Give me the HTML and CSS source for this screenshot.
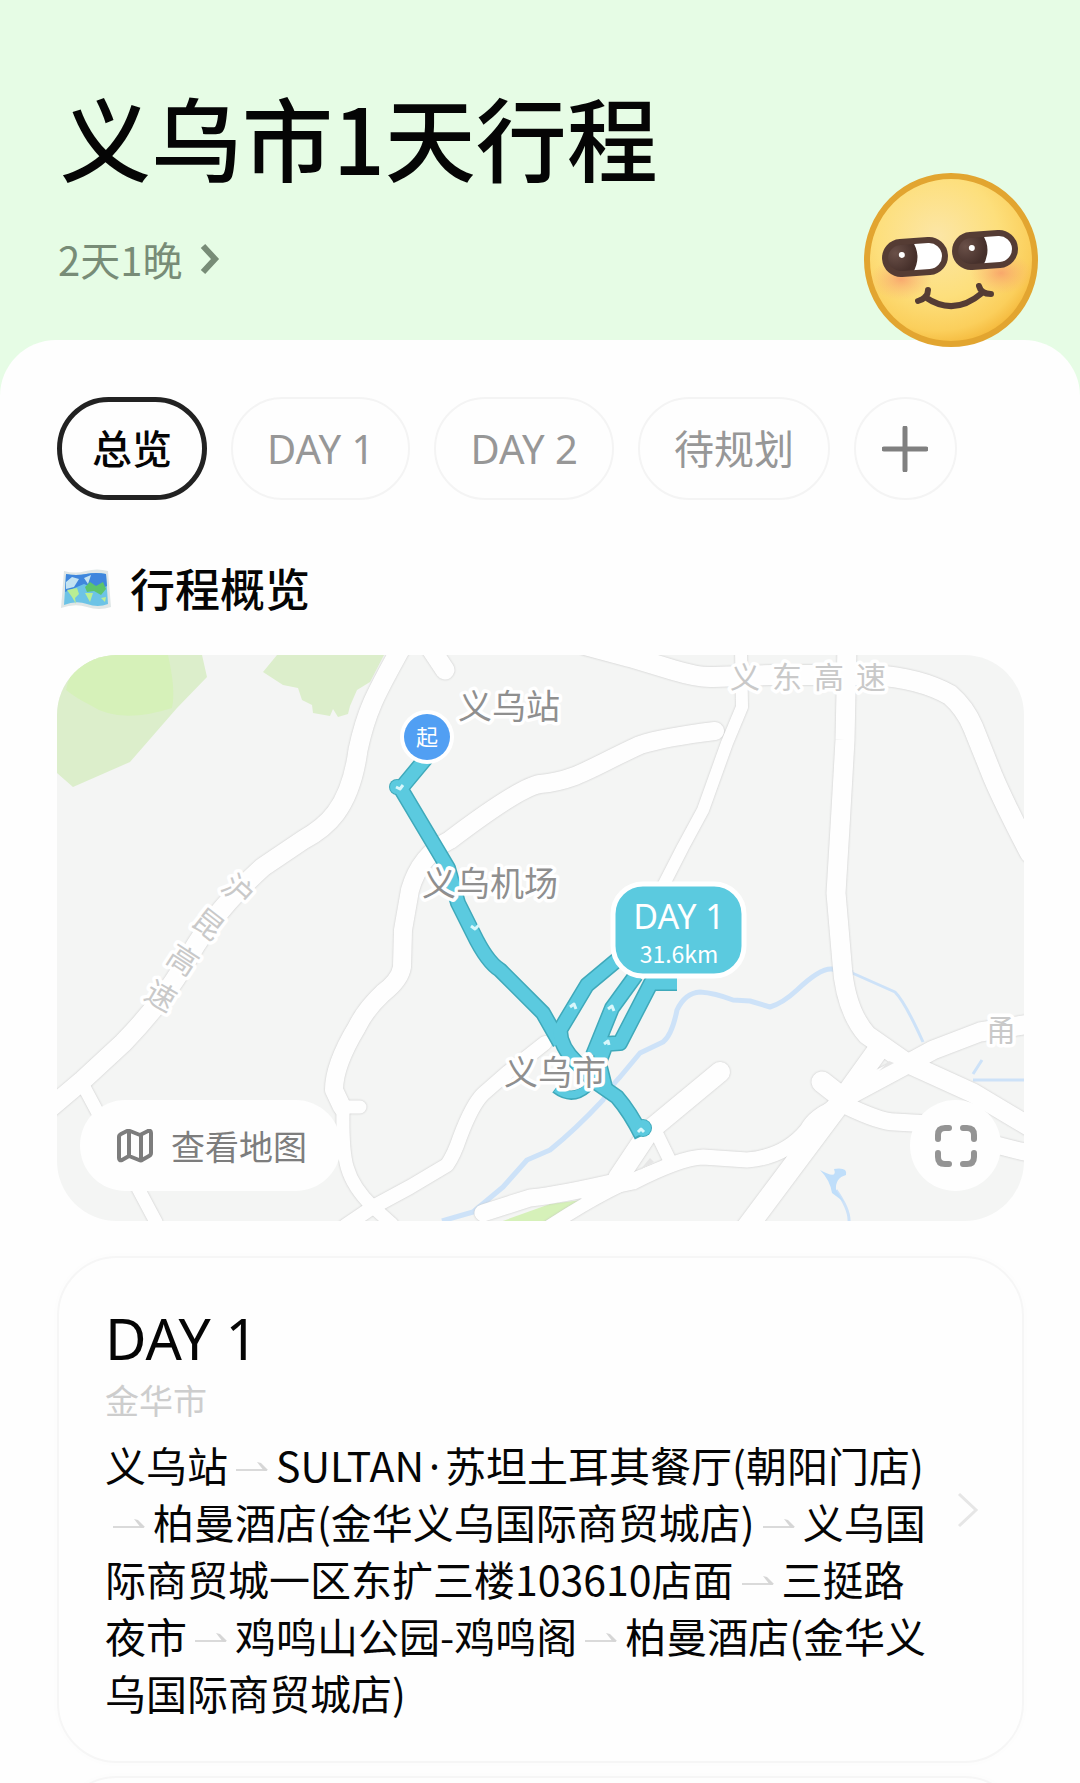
FILE: index.html
```html
<!DOCTYPE html>
<html lang="zh-CN">
<head>
<meta charset="utf-8">
<meta name="viewport" content="width=device-width, initial-scale=1">
<title>义乌市1天行程</title>
<link rel="stylesheet" href="styles.css">
</head>
<body>
<div class="screen">
  <header class="hero">
    <h1 class="hero-title">义乌市1天行程</h1>
    <button class="hero-duration" type="button">
      <span>2天1晚</span>
      <svg class="hero-chevron" viewBox="0 0 20 32" aria-hidden="true"><path d="M3 3 L15 16 L3 29"/></svg>
    </button>
    <svg class="smirk" viewBox="0 0 174 174" aria-hidden="true">
      <defs>
        <radialGradient id="face" cx="0.42" cy="0.36" r="0.66">
          <stop offset="0" stop-color="#fce6a6"/>
          <stop offset="0.55" stop-color="#fddf7c"/>
          <stop offset="0.85" stop-color="#fbcf5c"/>
          <stop offset="1" stop-color="#f4b83a"/>
        </radialGradient>
        <radialGradient id="blush">
          <stop offset="0" stop-color="#f79b6a" stop-opacity="0.8"/>
          <stop offset="1" stop-color="#f9b070" stop-opacity="0"/>
        </radialGradient>
        <radialGradient id="pupil" cx="0.35" cy="0.35" r="0.6">
          <stop offset="0" stop-color="#6a5048"/>
          <stop offset="1" stop-color="#46302b"/>
        </radialGradient>
      </defs>
      <circle cx="87" cy="87" r="84" fill="url(#face)" stroke="#e2a530" stroke-width="6"/>
      <ellipse cx="37" cy="106" rx="31" ry="21" fill="url(#blush)"/>
      <ellipse cx="137" cy="100" rx="31" ry="21" fill="url(#blush)"/>
      <g transform="translate(51 84) rotate(-4)">
        <rect x="-30" y="-16" width="60" height="32" rx="16" fill="#fff"/>
        <path d="M-14 -17 H-2 Q8 0 -4 17 H-14 A17 17 0 0 1 -14 -17 Z" fill="url(#pupil)"/>
        <rect x="-30" y="-16" width="60" height="32" rx="16" fill="none" stroke="#553c34" stroke-width="6"/>
        <circle cx="-13" cy="-3" r="3" fill="#fff"/>
      </g>
      <g transform="translate(121 77) rotate(-4)">
        <rect x="-30" y="-16" width="60" height="32" rx="16" fill="#fff"/>
        <path d="M-14 -17 H-2 Q8 0 -4 17 H-14 A17 17 0 0 1 -14 -17 Z" fill="url(#pupil)"/>
        <rect x="-30" y="-16" width="60" height="32" rx="16" fill="none" stroke="#553c34" stroke-width="6"/>
        <circle cx="-13" cy="-3" r="3" fill="#fff"/>
      </g>
      <path d="M54 128 Q64 125 64 117 M61 124 Q90 144 118 120 M115 113 Q117 121 127 121" fill="none" stroke="#553c34" stroke-width="6" stroke-linecap="round" stroke-linejoin="round"/>
    </svg>
  </header>

  <main class="sheet">
    <nav class="tabs" aria-label="行程">
      <button class="tab tab-active" type="button">总览</button>
      <button class="tab" type="button">DAY 1</button>
      <button class="tab" type="button">DAY 2</button>
      <button class="tab" type="button">待规划</button>
      <button class="tab tab-add" type="button" aria-label="添加">
        <svg viewBox="0 0 46 46" aria-hidden="true"><path d="M23 2 V44 M2 23 H44"/></svg>
      </button>
    </nav>

    <h2 class="section-title">
      <svg class="section-icon" viewBox="0 0 52 48" aria-hidden="true">
        <g transform="translate(0 6)">
          <path d="M4 1 Q15 4 26 1 T48 1 L51 37 Q39 41 27 37 T1 38 Z" fill="#dfe6e6"/>
          <path d="M6 4 Q16 6 26 4 T46 4 L48 34 Q38 38 27 34 T4 35 Z" fill="#6cc3e6"/>
          <path d="M6 4 Q16 6 26 4 T46 4 L47 16 L38 20 L24 14 L5 22 Z" fill="#3f86dd"/>
          <path d="M6 12 L12 7 L19 9 L14 17 L6 19 Z M24 8 L31 5 L28 14 Z" fill="#c3e3f2"/>
          <path d="M25 17 L30 12 L36 16 L43 12 L46 19 L41 25 L34 21 L27 22 Z" fill="#5cc46c"/>
          <path d="M7 20 L17 18 L19 24 L15 28 L16 34 L12 27 Z M25 23 L33 23 L30 32 Z M41 28 L46 27 L45 32 Z" fill="#b9ee93"/>
        </g>
      </svg>
      行程概览
    </h2>

    <section class="map" aria-label="行程概览">
      <svg class="map-canvas" viewBox="57 655 967 566" preserveAspectRatio="xMidYMid slice">
        <defs>
          <g id="roads">
            <path stroke-width="19" d="M400 650 C375 695 366 712 358 750 C350 810 325 828 303 840 L263 867 C215 910 195 945 183 967 Q160 1005 123 1043 L83 1080 L50 1108"/>
            <path stroke-width="13" d="M83 1085 L156 1222"/>
            <path stroke-width="19" d="M425 640 L445 670"/>
            <path stroke-width="18" d="M715 731 Q665 737 640 745 C590 768 575 781 540 784 Q520 787 450 840 Q420 855 410 890 L403 930 L402 967 Q400 980 383 993 Q365 1010 357 1027 Q334 1065 334 1090 L342 1107"/>
            <path stroke-width="13" d="M342 1107 L360 1107 M343 1110 C342 1160 345 1180 373 1207 L392 1224"/>
            <path stroke-width="14" d="M345 1226 L373 1207 L410 1187 L447 1165 Q454 1155 460 1137 Q472 1105 483 1094 L507 1073 L545 1043"/>
            <path stroke-width="20" d="M585 645 L630 657 L673 670 Q700 678 713 677 L773 675 L873 675 Q920 678 950 695 Q965 708 973 727 L993 777 Q1005 805 1030 853"/>
            <path stroke-width="12" d="M741 648 L742 707 L727 743 L703 810 L683 847 L660 892"/>
            <path stroke-width="19" d="M847 645 L845 740 L840 827 L836 893 L842 963 Q845 1010 867 1035 L907 1063 L973 1093 L1030 1127"/>
            <path stroke-width="19" d="M1030 1024 L980 1032 L933 1050 L900 1068 L853 1093 L830 1112"/>
            <path stroke-width="15" d="M835 1108 Q815 1115 807 1130 Q785 1157 747 1160 L703 1157 Q680 1158 633 1182 L585 1192"/>
            <path stroke-width="21" d="M878 1050 L840 1103 L745 1230 M822 1082 L845 1100"/>
            <path stroke-width="20" d="M720 1072 L650 1130 L618 1178"/>
            <path stroke-width="13" d="M655 1130 L672 1165 M672 1165 Q620 1180 550 1226"/>
            <path stroke-width="17" d="M620 1181 Q560 1195 530 1198 L483 1213"/>
            <path stroke-width="17" d="M845 1105 Q880 1122 895 1122 L930 1124 Q990 1145 1030 1153"/>
          </g>
        </defs>
        <rect x="57" y="655" width="967" height="566" fill="#f4f5f4"/>
        <path fill="#dceecb" d="M57 655 H202 L207 677 L177 708 L130 762 L73 787 L57 773 Z"/>
        <path fill="#d6f1b9" d="M66 690 Q72 655 115 655 H168 Q176 690 172 708 Q120 725 90 705 Q76 698 66 690 Z"/>
        <path fill="#dceecb" d="M277 655 L263 672 L283 685 L298 688 L302 700 L312 705 L313 713 L330 716 L333 709 L338 717 L348 714 L350 706 L357 690 L370 682 L384 655 Z"/>
        <path fill="#d6f1b9" d="M500 1222 L550 1204 L582 1200 L550 1222 Z"/>
        <g fill="none" stroke="#cde2f8" stroke-width="5" stroke-linejoin="round">
          <path d="M442 1221 L473 1212 L503 1187 L527 1160 L550 1150 Q575 1130 603 1100 Q612 1085 620 1077 L640 1053 L663 1042 Q672 1035 677 1010 Q685 993 700 992 Q715 993 733 1000 L750 1001 L770 1007 Q783 1003 797 990 Q820 968 832 969 L853 973"/>
          <path stroke-width="3" d="M850 972 L895 992 Q905 1002 923 1042"/>
          <path stroke-width="3" d="M973 1080 H1024 M973 1074 L982 1060"/>
          <path stroke-width="3" d="M836 1190 Q850 1210 849 1222"/>
        </g>
        <path fill="#bfdefa" d="M820 1170 Q838 1180 834 1169 Q848 1167 846 1175 Q835 1178 836 1190 L844 1202 L832 1193 Q830 1180 820 1170 Z"/>
        <g fill="none" stroke-linecap="round" stroke-linejoin="round">
          <use href="#roads" class="road-casing"/>
          <use href="#roads" class="road-fill"/>
          <path class="road-gap" d="M879 1071 L889 1061 L894 1063 Z M640 1170 L650 1158 L654 1162 Z"/>
        </g>
        <g fill="none" stroke-linejoin="round">
          <g stroke="#3fa9ba" stroke-width="16">
            <path d="M427 757 L402 787 M398 784 L448 868 L458 903 L473 933 Q487 962 500 970 L543 1013 L560 1043"/>
            <path d="M617 960 L587 985 L560 1030 Q560 1047 577 1063 L594 1081 L617 1097 Q630 1112 642 1136"/>
            <path d="M636 975 L612 1008 L593 1055 M677 983 L651 983 L620 1043 L606 1044 L599 1063 L605 1087"/>
          </g>
          <circle cx="397" cy="787" r="8" fill="#3fa9ba"/>
          <circle cx="643" cy="1128" r="9" fill="#3fa9ba"/>
          <path d="M555 1089 Q572 1102 588 1088" stroke="#3fa9ba" stroke-width="9"/>
          <g stroke="#5bcadf" stroke-width="13">
            <path d="M427 757 L402 787 M398 784 L448 868 L458 903 L473 933 Q487 962 500 970 L543 1013 L560 1043"/>
            <path d="M636 975 L612 1008 L593 1055 M677 983 L651 983 L620 1043 L606 1044 L599 1063 L605 1087"/>
            <path d="M617 960 L587 985 L560 1030 Q560 1047 577 1063 L594 1081 L617 1097 Q630 1112 641 1134"/>
          </g>
          <path d="M556 1089 Q572 1101 587 1088" stroke="#5bcadf" stroke-width="7"/>
          <circle cx="397" cy="787" r="7" fill="#5bcadf"/>
          <circle cx="643" cy="1128" r="8" fill="#5bcadf"/>
          <g stroke="#d8f7fb" stroke-width="3">
            <path d="M396 787 L400 789 L403 785 M471 926 L475 929 L479 925 M570 1007 L574 1004 L576 1009 M608 1009 L612 1006 L614 1011 M604 1044 L608 1041 L609 1045 M638 1132 L641 1129 L644 1132"/>
          </g>
        </g>
        <g class="map-label">
          <text x="458" y="719">义乌站</text>
          <text x="422" y="896">义乌机场</text>
          <text x="504" y="1085">义乌市</text>
        </g>
        <g class="map-label map-label-road">
          <text x="730 772 814 856" y="688">义东高速</text>
          <text x="986" y="1041">甬</text>
          <text transform="translate(238 890) rotate(42)" x="-15" y="11">沪</text>
          <text transform="translate(208 924) rotate(38)" x="-15" y="11">昆</text>
          <text transform="translate(183 960) rotate(33)" x="-15" y="11">高</text>
          <text transform="translate(161 996) rotate(30)" x="-15" y="11">速</text>
        </g>
        <circle cx="427" cy="737" r="27" fill="#fff"/>
        <circle cx="427" cy="737" r="23" fill="#519ff3"/>
        <text class="pin-text" x="427" y="745">起</text>
        <rect x="613" y="884" width="131" height="92" rx="30" fill="#5bcadf" stroke="#fff" stroke-width="5"/>
        <text class="badge-day" x="679" y="929">DAY 1</text>
        <text class="badge-km" x="679" y="963">31.6km</text>
      </svg>
      <div class="map-controls">
        <button class="map-open" type="button">
          <svg class="map-open-icon" viewBox="0 0 36 34" aria-hidden="true"><path d="M2 8 Q2 6 4 5 L10 2 Q12 2 13 2 L23 6 L31 2 Q34 1 34 4 V24 Q34 26 32 27 L25 31 Q24 32 22 31 L12 27 L5 31 Q2 32 2 29 Z M12 2 V27 M24 6 V31"/></svg>
          查看地图
        </button>
        <button class="map-expand" type="button" aria-label="全屏">
          <svg viewBox="0 0 42 42" aria-hidden="true"><path d="M3 14 V10 Q3 3 10 3 H14 M28 3 H32 Q39 3 39 10 V14 M39 28 V32 Q39 39 32 39 H28 M14 39 H10 Q3 39 3 32 V28"/></svg>
        </button>
      </div>
    </section>

    <svg class="symbols" aria-hidden="true"><symbol id="arrow" viewBox="0 0 48 14"><path d="M8 11 H39" stroke="#dadada" stroke-width="2"/><path d="M29 3 L33 4 L40 11 L36 12 Z" fill="#d6d6d6"/></symbol></svg>

    <a class="day-card" href="#day1">
      <div class="day-body">
        <h3 class="day-title">DAY 1</h3>
        <p class="day-city">金华市</p>
        <p class="day-route">义乌站<svg class="arrow" role="img" aria-label="到"><use href="#arrow"/></svg>SULTAN<span class="dot">·</span>苏坦土耳其餐厅(朝阳门店)<br><svg class="arrow" role="img" aria-label="到"><use href="#arrow"/></svg>柏曼酒店(金华义乌国际商贸城店)<svg class="arrow" role="img" aria-label="到"><use href="#arrow"/></svg>义乌国<br>际商贸城一区东扩三楼103610店面<svg class="arrow" role="img" aria-label="到"><use href="#arrow"/></svg>三挺路<br>夜市<svg class="arrow" role="img" aria-label="到"><use href="#arrow"/></svg>鸡鸣山公园-鸡鸣阁<svg class="arrow" role="img" aria-label="到"><use href="#arrow"/></svg>柏曼酒店(金华义<br>乌国际商贸城店)</p>
      </div>
      <svg class="day-chevron" viewBox="0 0 22 36" aria-hidden="true"><path d="M2 2 L19 18 L2 34"/></svg>
    </a>
    <div class="day-card day-card-next"></div>
  </main>
</div>
</body>
</html>
```
FILE: styles.css
```css
* {
  box-sizing: border-box;
}

body {
  margin: 0;
  background: #fefefe;
  color: #050505;
  font-family: "Noto Sans CJK SC", sans-serif;
}

button {
  margin: 0;
  padding: 0;
  border: 0;
  background: none;
  font: inherit;
}

h1, h2, h3, p {
  margin: 0;
  font-weight: 400;
}

.screen {
  position: relative;
  z-index: 0;
  height: 100vh;
  overflow: hidden;
  background: #e6fce5;
}

/* Header */
.hero {
  position: relative;
  padding: 85px 58px 53px;
}

.hero-title {
  padding-left: 2px;
  font-size: 91px;
  line-height: 100px;
  font-weight: 500;
}

.hero-duration {
  display: flex;
  align-items: center;
  gap: 18px;
  margin-top: 46px;
  color: #788c77;
  font-size: 40px;
  line-height: 56px;
}

.hero-chevron {
  width: 20px;
  height: 32px;
  fill: none;
  stroke: #788c77;
  stroke-width: 6;
}

.smirk {
  position: absolute;
  right: 42px;
  bottom: -7px;
  width: 174px;
  height: 174px;
}

/* Content sheet */
.sheet {
  position: relative;
  z-index: -1;
  padding: 57px 56px 0 57px;
  border-radius: 56px 56px 0 0;
  background: #fefefe;
}

.tabs {
  display: flex;
  gap: 24px;
}

.tab {
  height: 103px;
  padding: 0 34px;
  border: 2px solid #f4f4f4;
  border-radius: 52px;
  color: #979797;
  font-family: "Noto Sans", "Noto Sans CJK SC", sans-serif;
  font-size: 40px;
  line-height: 60px;
  white-space: nowrap;
}

.tab-active {
  padding: 0 30px;
  border: 5px solid #222;
  color: #050505;
  font-weight: 500;
}

.tab-add {
  display: flex;
  align-items: center;
  justify-content: center;
  width: 103px;
  padding: 0;
}

.tab-add svg {
  width: 46px;
  height: 46px;
  fill: none;
  stroke: #808080;
  stroke-width: 5;
  stroke-linecap: round;
}

.section-title {
  display: flex;
  align-items: center;
  gap: 18px;
  margin-top: 56px;
  padding-left: 3px;
  font-size: 45px;
  line-height: 64px;
  font-weight: 500;
}

.section-icon {
  width: 52px;
  height: 48px;
}

/* Map */
.map {
  display: grid;
  margin-top: 35px;
  border-radius: 60px;
  overflow: hidden;
}

.map-canvas,
.map-controls {
  grid-area: 1 / 1;
}

.map-canvas {
  display: block;
  width: 100%;
  aspect-ratio: 967 / 566;
}

.road-casing {
  stroke: #e0e0e0;
  filter: drop-shadow(0 0 1px #c4c4c4);
}

.road-fill {
  stroke: #fefefe;
}

.road-gap {
  fill: #e6e6e6;
}

.map-label {
  fill: #8f8f8f;
  stroke: #fff;
  stroke-width: 7px;
  stroke-linejoin: round;
  paint-order: stroke;
  font-size: 34px;
}

.map-label-road {
  fill: #c9c9c9;
  font-size: 30px;
}

.pin-text,
.badge-day,
.badge-km {
  fill: #fff;
  text-anchor: middle;
}

.pin-text {
  font-size: 22px;
}

.badge-day {
  font-family: "Noto Sans", sans-serif;
  font-size: 34px;
}

.badge-km {
  font-size: 23px;
}

.map-controls {
  display: flex;
  align-items: flex-end;
  justify-content: space-between;
  padding: 0 23px 30px;
  z-index: 1;
}

.map-open {
  display: flex;
  align-items: center;
  gap: 18px;
  height: 91px;
  padding: 0 34px 0 37px;
  border-radius: 46px;
  background: #fefefe;
  color: #7d7d7d;
  font-size: 34px;
}

.map-open-icon {
  width: 36px;
  height: 34px;
  fill: none;
  stroke: #7d7d7d;
  stroke-width: 4;
  stroke-linejoin: round;
}

.map-expand {
  display: flex;
  align-items: center;
  justify-content: center;
  width: 91px;
  height: 91px;
  border-radius: 50%;
  background: #fefefe;
}

.map-expand svg {
  width: 42px;
  height: 42px;
  fill: none;
  stroke: #949494;
  stroke-width: 6;
  stroke-linecap: round;
}

.symbols {
  display: block;
  width: 0;
  height: 0;
}

/* Day cards */
.day-card {
  display: flex;
  align-items: center;
  justify-content: space-between;
  margin-top: 35px;
  padding: 40px 43px 40px 46px;
  border: 2px solid #f6f6f6;
  border-radius: 60px;
  background: #fefefe;
  box-shadow: 0 0 16px rgba(0, 0, 0, 0.01);
  color: inherit;
  text-decoration: none;
}

.day-card-next {
  height: 240px;
  margin-top: 13px;
}

.day-title {
  font-family: "Noto Sans", sans-serif;
  font-size: 57px;
  line-height: 80px;
}

.day-city {
  color: #cdcdcd;
  font-size: 34px;
  line-height: 44px;
}

.day-route {
  margin-top: 14px;
  font-size: 41px;
  line-height: 57px;
  white-space: nowrap;
}

.dot {
  padding: 0 5px;
  font-family: "Noto Sans", sans-serif;
  line-height: 1;
}

.arrow {
  width: 48px;
  height: 14px;
  vertical-align: 9px;
}

.day-chevron {
  flex: none;
  width: 22px;
  height: 36px;
  fill: none;
  stroke: #e6e6e6;
  stroke-width: 3;
}
```
